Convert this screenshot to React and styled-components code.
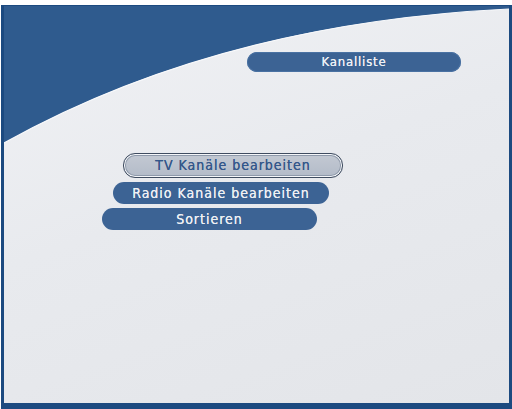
import React from "react";
import styled, { createGlobalStyle } from "styled-components";

const GlobalStyle = createGlobalStyle`
  html, body {
    margin: 0;
    padding: 0;
    background: #ffffff;
  }
  body {
    font-family: "DejaVu Sans Condensed", "DejaVu Sans", sans-serif;
  }
`;

const Page = styled.div`
  width: 512px;
  height: 409px;
  padding: 5px 0 0 1px;
  box-sizing: border-box;
`;

const Screen = styled.div`
  position: relative;
  width: 511px;
  height: 404px;
  box-sizing: border-box;
  border-style: solid;
  border-color: #1c4a80;
  border-width: 1px 3px 6px 3px;
  background: linear-gradient(160deg, #f1f2f5 0%, #e8eaee 45%, #e3e5e9 100%);
  overflow: hidden;
`;

const Swoosh = styled.svg`
  position: absolute;
  top: 0;
  left: 0;
  width: 505px;
  height: 150px;
`;

const Content = styled.div`
  position: relative;
  display: flex;
  flex-direction: column;
  padding-top: 46px;
`;

const Title = styled.div`
  margin-left: 243px;
  width: 214px;
  height: 20px;
  border-radius: 10px;
  background: #3c6394;
  box-shadow: inset 0 0 0 1px #4a72a3;
  color: #eef0f4;
  font-size: 13px;
  line-height: 20px;
  text-align: center;
  letter-spacing: 0.8px;
  text-shadow: 0 0 0.5px #eef0f4;
`;

const Menu = styled.div`
  display: flex;
  flex-direction: column;
  align-items: flex-start;
  gap: 4px;
  margin-top: 81px;
`;

const Item = styled.div`
  margin-left: ${(p) => p.$indent}px;
  width: ${(p) => p.$width}px;
  height: ${(p) => (p.$active ? 25 : 22)}px;
  box-sizing: border-box;
  border-radius: 12px;
  font-size: 14px;
  line-height: ${(p) => (p.$active ? 23 : 22)}px;
  text-align: center;
  letter-spacing: 1px;
  background: ${(p) =>
    p.$active ? "linear-gradient(#c3c9d3, #b3bbc8)" : "#3c6394"};
  color: ${(p) => (p.$active ? "#34578a" : "#eef0f4")};
  text-shadow: 0 0 0.6px ${(p) => (p.$active ? "#34578a" : "#eef0f4")};
  border: ${(p) => (p.$active ? "1px solid #3f4c60" : "none")};
  box-shadow: ${(p) =>
    p.$active ? "inset 0 0 0 1px #f4f6f9, inset 0 0 0 2px #8e99aa" : "none"};
`;

const items = [
  { label: "TV Kanäle bearbeiten", indent: 119, width: 220, active: true },
  { label: "Radio Kanäle bearbeiten", indent: 109, width: 216 },
  { label: "Sortieren", indent: 98, width: 215 },
];

export default function App() {
  return (
    <>
      <GlobalStyle />
      <Page>
        <Screen>
          <Swoosh viewBox="0 0 505 150">
            <path
              d="M0 0 H505 V3 C280 14 120 70 0 137 Z"
              fill="#2f5b8e"
            />
            <path
              d="M505 3 C280 14 120 70 0 137"
              fill="none"
              stroke="#f8f9fb"
              strokeWidth="1.2"
            />
          </Swoosh>
          <Content>
            <Title>Kanalliste</Title>
            <Menu>
              {items.map((it) => (
                <Item
                  key={it.label}
                  $indent={it.indent}
                  $width={it.width}
                  $active={it.active}
                >
                  {it.label}
                </Item>
              ))}
            </Menu>
          </Content>
        </Screen>
      </Page>
    </>
  );
}
